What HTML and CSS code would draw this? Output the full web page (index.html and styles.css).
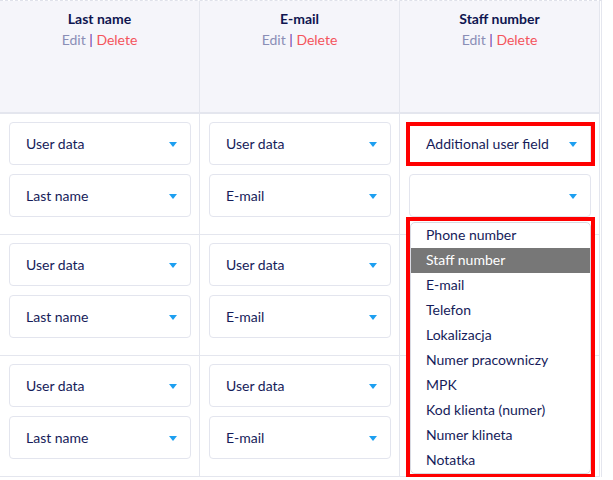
FILE: index.html
```html
<!DOCTYPE html>
<html lang="en">

<head>
    <meta charset="UTF-8">
    <meta name="viewport" content="width=device-width, initial-scale=1.0">
    <title>Import mapping</title>
    <link rel="stylesheet" href="styles.css">
</head>

<body>
    <div class="grid">
        <div class="head">
            <div class="title">Last name</div>
            <div class="actions"><span class="edit">Edit</span> <span class="sep">|</span> <span class="del">Delete</span></div>
        </div>
        <div class="head">
            <div class="title">E-mail</div>
            <div class="actions"><span class="edit">Edit</span> <span class="sep">|</span> <span class="del">Delete</span></div>
        </div>
        <div class="head">
            <div class="title">Staff number</div>
            <div class="actions"><span class="edit">Edit</span> <span class="sep">|</span> <span class="del">Delete</span></div>
        </div>

        <!-- row 1 -->
        <div class="cell">
            <div class="select"><span>User data</span><i class="caret"></i></div>
            <div class="select"><span>Last name</span><i class="caret"></i></div>
        </div>
        <div class="cell">
            <div class="select"><span>User data</span><i class="caret"></i></div>
            <div class="select"><span>E-mail</span><i class="caret"></i></div>
        </div>
        <div class="cell">
            <div class="select marked"><span>Additional user field</span><i class="caret"></i></div>
            <div class="select"><span></span><i class="caret"></i></div>
        </div>

        <!-- row 2 -->
        <div class="cell">
            <div class="select"><span>User data</span><i class="caret"></i></div>
            <div class="select"><span>Last name</span><i class="caret"></i></div>
        </div>
        <div class="cell">
            <div class="select"><span>User data</span><i class="caret"></i></div>
            <div class="select"><span>E-mail</span><i class="caret"></i></div>
        </div>
        <div class="cell">
            <div class="select"><span></span><i class="caret"></i></div>
            <div class="select"><span></span><i class="caret"></i></div>
        </div>

        <!-- row 3 -->
        <div class="cell">
            <div class="select"><span>User data</span><i class="caret"></i></div>
            <div class="select"><span>Last name</span><i class="caret"></i></div>
        </div>
        <div class="cell">
            <div class="select"><span>User data</span><i class="caret"></i></div>
            <div class="select"><span>E-mail</span><i class="caret"></i></div>
        </div>
        <div class="cell">
            <div class="select"><span></span><i class="caret"></i></div>
            <div class="select"><span></span><i class="caret"></i></div>
        </div>

        <!-- open dropdown -->
        <div class="menu">
            <ul class="options">
                <li>Phone number</li>
                <li class="active">Staff number</li>
                <li>E-mail</li>
                <li>Telefon</li>
                <li>Lokalizacja</li>
                <li>Numer pracowniczy</li>
                <li>MPK</li>
                <li>Kod klienta (numer)</li>
                <li>Numer klineta</li>
                <li>Notatka</li>
            </ul>
        </div>
    </div>
</body>

</html>
```

FILE: styles.css
```css
body {
    margin: 0;
    font-family: Lato, "Open Sans", sans-serif;
    font-size: 14px;
    color: #161c5a;
    background-color: #fff;
}

.grid {
    position: relative;
    display: grid;
    grid-template-columns: repeat(3, 200px);
    width: 601px;
    border-top: 1px dashed #dfe1ea;
    border-right: 1px solid #e4e6ee;
}

.head {
    box-sizing: border-box;
    height: 113px;
    padding-top: 8px;
    background-color: #f5f5fa;
    border-right: 1px solid #e4e6ee;
    border-bottom: 2px solid #e4e6ee;
    text-align: center;
}

.title {
    font-weight: bold;
    line-height: 20px;
    color: #0f1550;
}

.actions {
    line-height: 22px;
}

.edit {
    color: #8a8eb6;
}

.sep {
    color: #6a2fa0;
}

.del {
    color: #f4545c;
}

.cell {
    height: 121px;
    box-sizing: border-box;
    padding: 8px 8px 0 9px;
    border-right: 1px solid #e4e6ee;
    border-bottom: 1px solid #e4e6ee;
}

.select {
    display: flex;
    align-items: center;
    justify-content: space-between;
    height: 43px;
    box-sizing: border-box;
    padding: 0 13px 1px 16px;
    margin-bottom: 9px;
    border: 1px solid #e3e5ee;
    border-radius: 4px;
    background-color: #fff;
}

/* red annotation box */
.select.marked {
    position: relative;
}

.select.marked::after {
    content: "";
    position: absolute;
    top: -1px;
    left: -4px;
    right: -5px;
    bottom: -2px;
    border: 4px solid #ff0000;
}

.caret {
    width: 0;
    height: 0;
    border-left: 4px solid transparent;
    border-right: 4px solid transparent;
    border-top: 5px solid #1d9ff0;
    margin-top: 3px;
}

.menu {
    position: absolute;
    top: 216px;
    left: 406px;
    width: 189px;
    box-sizing: border-box;
    border: 4px solid #ff0000;
    padding-top: 1px;
}

.options {
    list-style: none;
    margin: 0;
    padding: 0;
    background-color: #fff;
    border: 1px solid #d8dae2;
    border-radius: 5px;
    overflow: hidden;
}

.options li {
    height: 25px;
    line-height: 24px;
    padding-left: 15px;
    color: #161c5a;
}

.options li.active {
    background-color: #777;
    color: #fff;
}
```
